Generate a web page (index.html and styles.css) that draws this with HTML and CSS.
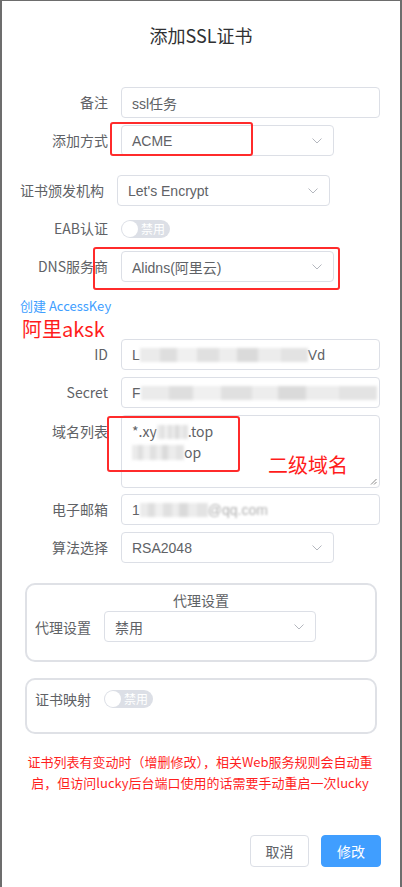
FILE: index.html
```html
<!DOCTYPE html>
<html lang="zh-CN">
<head>
<meta charset="utf-8">
<title>添加SSL证书</title>
<link rel="stylesheet" href="styles.css">
</head>
<body>
<div class="dialog">
  <header class="dlg-header"><h1 class="dlg-title">添加SSL证书</h1></header>
  <div class="dlg-body">
    <div class="row">
      <label class="lbl">备注</label>
      <div class="field full"><span class="val">ssl任务</span></div>
    </div>
    <div class="row gap-big">
      <label class="lbl">添加方式</label>
      <div class="field select"><span class="val">ACME</span><svg class="chev" viewBox="0 0 10 6"><path d="M0.5 0.5 L5 5 L9.5 0.5"/></svg></div>
      <span class="mark mark-acme"></span>
    </div>
    <div class="row shift">
      <label class="lbl">证书颁发机构</label>
      <div class="field select"><span class="val">Let's Encrypt</span><svg class="chev" viewBox="0 0 10 6"><path d="M0.5 0.5 L5 5 L9.5 0.5"/></svg></div>
    </div>
    <div class="row center">
      <label class="lbl">EAB认证</label>
      <span class="switch"><span class="knob"></span><span class="sw-text">禁用</span></span>
    </div>
    <div class="row gap-link">
      <label class="lbl">DNS服务商</label>
      <div class="field select"><span class="val">Alidns(阿里云)</span><svg class="chev" viewBox="0 0 10 6"><path d="M0.5 0.5 L5 5 L9.5 0.5"/></svg></div>
      <span class="mark mark-dns"></span>
    </div>
    <div class="link-row">
      <a class="link">创建 AccessKey</a>
      <span class="note note-aksk">阿里aksk</span>
    </div>
    <div class="row">
      <label class="lbl">ID</label>
      <div class="field full"><span class="val">L<span class="smudge w-id"></span>Vd</span></div>
    </div>
    <div class="row">
      <label class="lbl">Secret</label>
      <div class="field full"><span class="val">F<span class="smudge w-secret"></span></span></div>
    </div>
    <div class="row gap-sm">
      <label class="lbl lbl-top">域名列表</label>
      <div class="field area">
        <div class="line">*.xy<span class="smudge w-d1"></span>.top</div>
        <div class="line"><span class="smudge w-d2"></span>op</div>
        <svg class="grip" viewBox="0 0 7 7"><path d="M6.5 1 L1 6.5 M6.5 4 L4 6.5"/></svg>
      </div>
      <span class="mark mark-domain"></span>
      <span class="note note-level">二级域名</span>
    </div>
    <div class="row">
      <label class="lbl">电子邮箱</label>
      <div class="field full"><span class="val">1<span class="smudge w-mail"></span><span class="faded">@qq.com</span></span></div>
    </div>
    <div class="row gap-box">
      <label class="lbl">算法选择</label>
      <div class="field select"><span class="val">RSA2048</span><svg class="chev" viewBox="0 0 10 6"><path d="M0.5 0.5 L5 5 L9.5 0.5"/></svg></div>
    </div>

    <section class="box box-proxy">
      <div class="box-title">代理设置</div>
      <div class="box-row">
        <label class="lbl-inline">代理设置</label>
        <div class="field select sm"><span class="val cjk">禁用</span><svg class="chev" viewBox="0 0 10 6"><path d="M0.5 0.5 L5 5 L9.5 0.5"/></svg></div>
      </div>
    </section>

    <section class="box box-map">
      <div class="box-row center">
        <label class="lbl-inline">证书映射</label>
        <span class="switch"><span class="knob"></span><span class="sw-text">禁用</span></span>
      </div>
    </section>

    <p class="notice">证书列表有变动时（增删修改），相关Web服务规则会自动重<br>启，但访问lucky后台端口使用的话需要手动重启一次lucky</p>
  </div>
  <footer class="dlg-footer">
    <button class="btn">取消</button>
    <button class="btn primary">修改</button>
  </footer>
</div>
</body>
</html>
```
FILE: styles.css
```css
* { box-sizing: border-box; }
html, body { margin: 0; height: 100%; }
body {
  background: #6d6d6d;
  font-family: "Noto Sans CJK SC", sans-serif;
  overflow: hidden;
}
.dialog {
  margin: 1px 2px 0 2px;
  height: 886px;
  background: #fff;
  display: flex;
  flex-direction: column;
}
.dlg-header { padding-top: 22px; text-align: center; }
.dlg-title {
  margin: 0;
  font-size: 18px;
  line-height: 24px;
  font-weight: 400;
  color: #303133;
}
.dlg-body { margin-top: 40px; padding: 0 20px 0 18px; }

.row {
  position: relative;
  display: flex;
  align-items: flex-start;
  margin-bottom: 7px;
}
.row.center { align-items: center; height: 31px; }
.row.gap-big { margin-bottom: 19px; }
.row.gap-link { margin-bottom: 15px; }
.row.gap-sm { margin-bottom: 6px; }
.row.gap-box { margin-bottom: 20px; }
.row.shift { margin-left: -4px; margin-right: 4px; }

.lbl {
  width: 88px;
  flex: none;
  margin-right: 13px;
  text-align: right;
  font-size: 14px;
  line-height: 31px;
  color: #606266;
  white-space: nowrap;
}
.lbl-top { padding-top: 1px; }

.field {
  position: relative;
  height: 31px;
  border: 1px solid #dcdfe6;
  border-radius: 4px;
  display: flex;
  align-items: center;
  padding: 0 11px 0 10px;
  font-family: "Liberation Sans", "Noto Sans CJK SC", sans-serif;
  font-size: 14px;
  color: #606266;
  white-space: nowrap;
  overflow: hidden;
}
.field.full { width: 259px; }
.field.select { width: 213px; justify-content: space-between; }
.field.select.sm { width: 212px; }
.val { display: inline-flex; align-items: center; }
.val.cjk { font-family: "Noto Sans CJK SC", sans-serif; }
.chev { width: 10px; height: 6px; flex: none; }
.chev path { fill: none; stroke: #b4b7be; stroke-width: 1; }

.field.area {
  width: 259px;
  height: 73px;
  display: block;
  padding: 5px 10px;
  font-family: "Noto Sans CJK SC", sans-serif;
}
.line { line-height: 21px; display: flex; align-items: center; height: 21px; }
.grip { position: absolute; right: 2px; bottom: 2px; width: 7px; height: 7px; }
.grip path { stroke: #8a8a8a; stroke-width: 1; fill: none; }

.smudge {
  display: inline-block;
  height: 14px;
  flex: none;
  filter: blur(1.5px);
  background: linear-gradient(90deg,
    #ebebeb 0 12%, #dedede 12% 22%, #f0f0f0 22% 34%, #e0e0e0 34% 47%,
    #ededed 47% 58%, #dadada 58% 70%, #ececec 70% 84%, #e3e3e3 84% 100%);
}
.w-id { width: 168px; }
.w-secret { width: 236px; }
.w-mail { width: 68px; }
.w-d1 { width: 31px; }
.w-d2 { width: 52px; height: 15px; }
.faded { color: #b0b0b0; filter: blur(1px); }

.switch {
  display: inline-flex;
  align-items: center;
  width: 49px;
  height: 18px;
  border-radius: 9px;
  background: #dcdfe6;
  padding: 0 1px;
  flex: none;
}
.knob { width: 16px; height: 16px; border-radius: 50%; background: #fff; flex: none; }
.sw-text { margin-left: 3px; font-size: 12px; line-height: 18px; color: #fff; }

.link-row {
  position: relative;
  height: 18px;
  margin-bottom: 24px;
  font-size: 13px;
  line-height: 18px;
}
.link { color: #409eff; }

.mark {
  position: absolute;
  border: 2px solid #ff2b2b;
  border-radius: 3px;
}
.mark-acme { left: 90px; top: -3px; width: 143px; height: 34px; }
.mark-dns { left: 73px; top: -4px; width: 247px; height: 43px; }
.mark-domain { left: 87px; top: 1px; width: 133px; height: 56px; }

.note {
  position: absolute;
  font-size: 20px;
  line-height: 24px;
  color: #ff1c1c;
  white-space: nowrap;
}
.note-aksk { left: 2px; top: 20px; }
.note-level { left: 248px; top: 38px; }

.box {
  margin: 0 3px 0 5px;
  border: 2px solid #dfe1e6;
  border-radius: 10px;
  padding: 0 8px;
}
.box-proxy { height: 79px; padding-top: 5px; margin-bottom: 16px; }
.box-map { height: 56px; padding-top: 9px; }
.box-title { text-align: center; font-size: 14px; line-height: 20px; color: #606266; margin-bottom: 1px; }
.box-row { display: flex; align-items: center; }
.box-row.center { height: 20px; }
.lbl-inline {
  width: 56px;
  margin-right: 13px;
  font-size: 14px;
  line-height: 20px;
  color: #606266;
  white-space: nowrap;
}

.notice {
  margin: 17px 0 0;
  text-align: center;
  font-size: 13px;
  line-height: 21px;
  color: #ff1f1f;
  white-space: nowrap;
}

.dlg-footer {
  display: flex;
  justify-content: flex-end;
  gap: 12px;
  padding: 42px 19px 0 0;
}
.btn {
  height: 32px;
  width: 59px;
  border: 1px solid #dcdfe6;
  border-radius: 4px;
  background: #fff;
  font-family: "Noto Sans CJK SC", sans-serif;
  font-size: 14px;
  color: #606266;
  padding: 0;
}
.btn.primary { width: 60px; background: #409eff; border-color: #409eff; color: #fff; }
```
